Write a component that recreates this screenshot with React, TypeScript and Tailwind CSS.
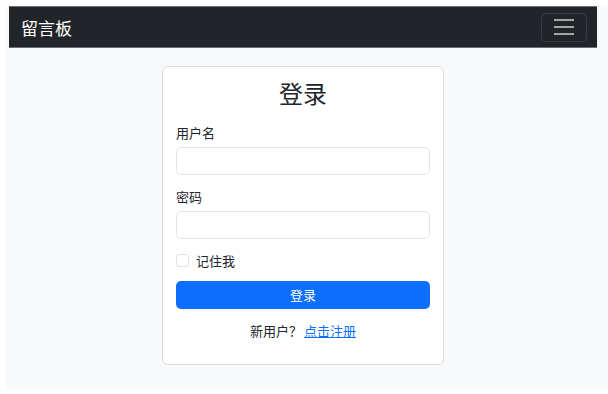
import React from 'react';

const font = { fontFamily: '"Noto Sans CJK SC", "Noto Sans", sans-serif' };

export default function App() {
  return (
    <div className="h-[394px] bg-white pl-[6px] pt-[6px]" style={font}>
      <div className="h-[383px] bg-[#f8f9fa]">
        <div className="ml-[3px] w-[588px]">
          <nav className="flex h-[42px] items-center justify-between border-y border-[#6b6f73] bg-[#212529] pl-[12px] pr-[10px]">
            <span className="text-[17px] leading-none text-white">留言板</span>
            <button className="flex h-[29px] w-[46px] flex-col items-center justify-center gap-[5px] rounded-[5px] border border-[#3a3e42]">
              <span className="h-[2px] w-[20px] bg-[#a4a6a8]" />
              <span className="h-[2px] w-[20px] bg-[#a4a6a8]" />
              <span className="h-[2px] w-[20px] bg-[#a4a6a8]" />
            </button>
          </nav>

          <div className="flex justify-center pt-[18px]">
            <div className="w-[282px] rounded-[6px] border border-[#dedede] bg-white px-[13px] pb-[24px] pt-[11px] text-[#212529]">
              <h2 className="text-center text-[24px] leading-[29px]">登录</h2>

              <label className="mt-[16px] block text-[13px] leading-[19px]">用户名</label>
              <input className="mt-[5px] block h-[28px] w-full rounded-[5px] border border-[#e3e6e9] bg-white outline-none" />

              <label className="mt-[12px] block text-[13px] leading-[19px]">密码</label>
              <input
                type="password"
                className="mt-[5px] block h-[28px] w-full rounded-[5px] border border-[#e3e6e9] bg-white outline-none"
              />

              <div className="mt-[11px] flex h-[20px] items-center gap-[7px]">
                <span className="h-[13px] w-[13px] rounded-[3px] border border-[#dee2e6] bg-white" />
                <span className="text-[13px] leading-[19px]">记住我</span>
              </div>

              <button className="mt-[11px] flex h-[28px] w-full items-center justify-center rounded-[5px] bg-[#0d6efd] text-[13px] text-white">
                登录
              </button>

              <p className="mt-[12px] text-center text-[13px] leading-[19px]">
                新用户？<a className="ml-[2px] text-[#0d6efd] underline">点击注册</a>
              </p>
            </div>
          </div>
        </div>
      </div>
    </div>
  );
}
